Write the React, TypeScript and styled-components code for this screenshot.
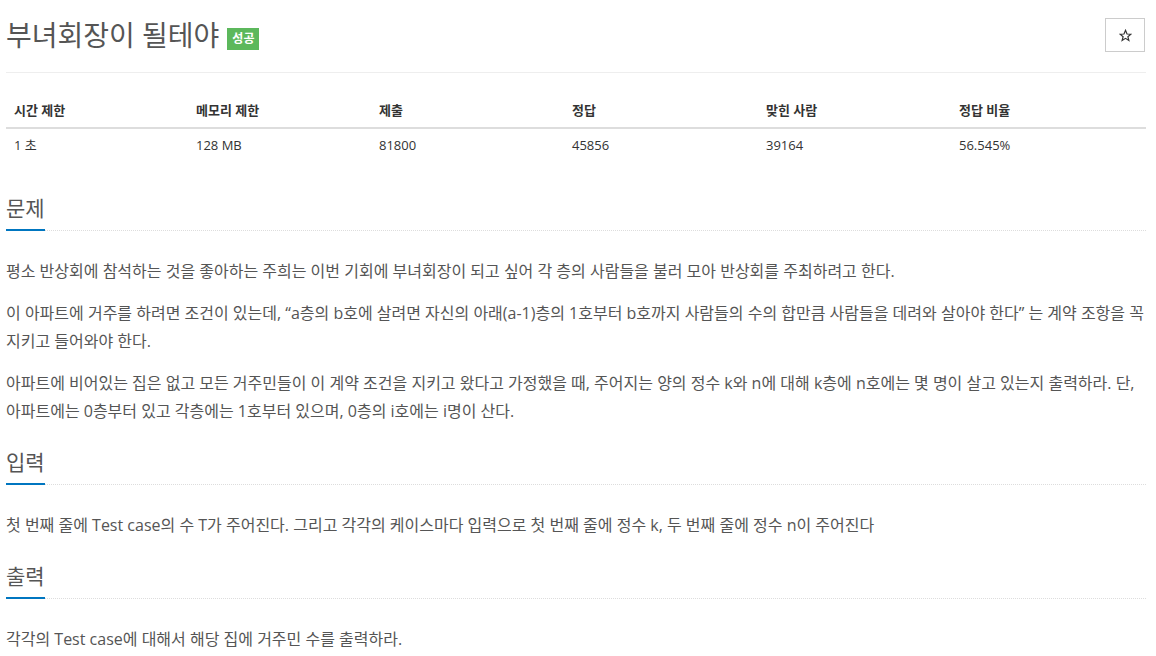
import React from "react";
import styled, { createGlobalStyle } from "styled-components";

const GlobalStyle = createGlobalStyle`
  html, body { margin: 0; padding: 0; background: #fff; }
  body {
    font-family: "Open Sans", "Noto Sans CJK KR", sans-serif;
    color: #555;
  }
  * { box-sizing: border-box; }
`;

const Page = styled.div`
  width: 1152px;
  padding: 0 6px;
`;

const TitleRow = styled.div`
  display: flex;
  align-items: center;
  padding-top: 18px;
  padding-bottom: 20px;
  border-bottom: 1px solid #eee;
`;

const Title = styled.h1`
  margin: 0;
  font-size: 28px;
  line-height: 34px;
  font-weight: 400;
  color: #555;
  display: flex;
  align-items: center;
  gap: 8px;
  flex: 1;
`;

const Badge = styled.span`
  display: inline-block;
  background: #5cb85c;
  color: #fff;
  font-size: 12px;
  font-weight: 700;
  line-height: 22px;
  height: 22px;
  padding: 0 5px;
  margin-top: 8px;
`;

const StarButton = styled.button`
  width: 40px;
  height: 34px;
  border: 1px solid #ccc;
  background: #fff;
  display: flex;
  align-items: center;
  justify-content: center;
  padding: 0;
  margin-right: 1px;
`;

const Table = styled.table`
  width: 1140px;
  margin-top: 20px;
  border-collapse: collapse;
  font-size: 13px;
  color: #333;
  table-layout: fixed;
`;

const Th = styled.th`
  text-align: left;
  font-weight: 700;
  padding: 8px;
  line-height: 18px;
  border-bottom: 2px solid #ddd;
`;

const Td = styled.td`
  padding: 7px 8px 9px;
  line-height: 18px;
`;

const Section = styled.section<{ $top: number }>`
  margin-top: ${(p) => p.$top}px;
`;

const Headline = styled.div`
  border-bottom: 1px dotted #ddd;
  margin-bottom: 26px;
  height: 38px;
`;

const HeadTitle = styled.h2`
  display: inline-block;
  margin: 0;
  font-size: 21px;
  line-height: 30px;
  font-weight: 400;
  color: #555;
  padding-bottom: 6px;
  border-bottom: 2px solid #0076c0;
`;

const Para = styled.p`
  margin: 0 0 14px;
  font-size: 16px;
  line-height: 28px;
  color: #555;
`;

const StarIcon = () => (
  <svg width="13" height="13" viewBox="0 0 24 24" fill="none" stroke="#333" strokeWidth="2.2" strokeLinejoin="miter">
    <polygon points="12,2.5 14.8,9.2 22,9.6 16.4,14.2 18.2,21.3 12,17.3 5.8,21.3 7.6,14.2 2,9.6 9.2,9.2" />
  </svg>
);

const cols = [182, 183, 193, 194, 193, 195];
const heads = ["시간 제한", "메모리 제한", "제출", "정답", "맞힌 사람", "정답 비율"];
const vals = ["1 초", "128 MB", "81800", "45856", "39164", "56.545%"];

export default function App() {
  return (
    <Page>
      <GlobalStyle />
      <TitleRow>
        <Title>
          부녀회장이 될테야 <Badge>성공</Badge>
        </Title>
        <StarButton aria-label="star">
          <StarIcon />
        </StarButton>
      </TitleRow>
      <Table>
        <colgroup>
          {cols.map((w, i) => (
            <col key={i} style={{ width: w }} />
          ))}
        </colgroup>
        <thead>
          <tr>
            {heads.map((h) => (
              <Th key={h}>{h}</Th>
            ))}
          </tr>
        </thead>
        <tbody>
          <tr>
            {vals.map((v) => (
              <Td key={v}>{v}</Td>
            ))}
          </tr>
        </tbody>
      </Table>
      <Section $top={30}>
        <Headline>
          <HeadTitle>문제</HeadTitle>
        </Headline>
        <Para>평소 반상회에 참석하는 것을 좋아하는 주희는 이번 기회에 부녀회장이 되고 싶어 각 층의 사람들을 불러 모아 반상회를 주최하려고 한다.</Para>
        <Para>이 아파트에 거주를 하려면 조건이 있는데, “a층의 b호에 살려면 자신의 아래(a-1)층의 1호부터 b호까지 사람들의 수의 합만큼 사람들을 데려와 살아야 한다” 는 계약 조항을 꼭 지키고 들어와야 한다.</Para>
        <Para>아파트에 비어있는 집은 없고 모든 거주민들이 이 계약 조건을 지키고 왔다고 가정했을 때, 주어지는 양의 정수 k와 n에 대해 k층에 n호에는 몇 명이 살고 있는지 출력하라. 단, 아파트에는 0층부터 있고 각층에는 1호부터 있으며, 0층의 i호에는 i명이 산다.</Para>
      </Section>
      <Section $top={22}>
        <Headline>
          <HeadTitle>입력</HeadTitle>
        </Headline>
        <Para>첫 번째 줄에 Test case의 수 T가 주어진다. 그리고 각각의 케이스마다 입력으로 첫 번째 줄에 정수 k, 두 번째 줄에 정수 n이 주어진다</Para>
      </Section>
      <Section $top={22}>
        <Headline>
          <HeadTitle>출력</HeadTitle>
        </Headline>
        <Para>각각의 Test case에 대해서 해당 집에 거주민 수를 출력하라.</Para>
      </Section>
    </Page>
  );
}
